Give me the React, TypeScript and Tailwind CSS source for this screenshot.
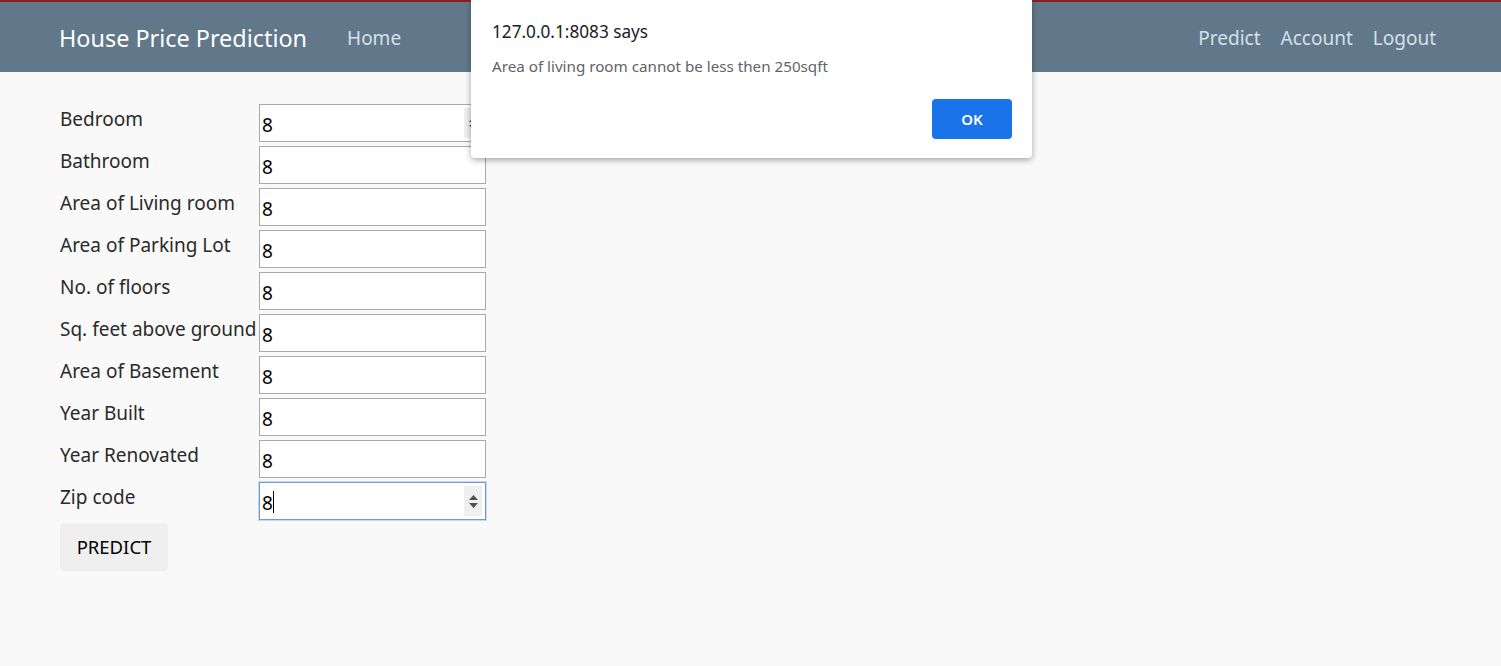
import React from "react";

const fields = [
  "Bedroom",
  "Bathroom",
  "Area of Living room",
  "Area of Parking Lot",
  "No. of floors",
  "Sq. feet above ground",
  "Area of Basement",
  "Year Built",
  "Year Renovated",
  "Zip code",
];

function Spinner() {
  return (
    <div className="absolute right-[3px] top-[3px] bottom-[3px] w-[18px] bg-[#efefef] flex flex-col items-center justify-center gap-[3px]">
      <svg width="9" height="5" viewBox="0 0 9 5"><path d="M0 5 L4.5 0 L9 5 Z" fill="#505050" /></svg>
      <svg width="9" height="5" viewBox="0 0 9 5"><path d="M0 0 L4.5 5 L9 0 Z" fill="#505050" /></svg>
    </div>
  );
}

export default function App() {
  return (
    <div className="relative w-[1501px] h-[666px] bg-[#f9f9f9] overflow-hidden" style={{ fontFamily: '"Noto Sans", "Open Sans", sans-serif' }}>
      <div className="h-[2px] bg-[#8a1f1f]" />
      <nav className="h-[70px] bg-[#607889] flex items-center pl-[59px] pr-[65px] pt-[3px]">
        <span className="text-white text-[23.4px] leading-none">House Price Prediction</span>
        <span className="ml-[40px] text-[#d5e0e8] text-[19px] leading-none">Home</span>
        <div className="ml-auto flex gap-[20px] text-[#d5e0e8] text-[19px] leading-none">
          <span>Predict</span>
          <span>Account</span>
          <span>Logout</span>
        </div>
      </nav>
      <form className="pt-[32px] pl-[60px] flex flex-col gap-[4px]">
        {fields.map((f, i) => (
          <div key={f} className="flex items-start h-[38px]">
            <label className="w-[199px] text-[#2a2a2a] text-[19px] leading-none pt-[6px] whitespace-nowrap">{f}</label>
            <div
              className={
                "relative w-[227px] h-[38px] bg-white flex items-center pl-[2px] text-[19px] text-black " +
                (i === 9 ? "border border-[#6f9ad8] shadow-[0_0_0_1px_#c6d8f2]" : "border border-[#a9a9a9]")
              }
            >
              <span className="pt-[4px] leading-none">8</span>
              {i === 9 && <span className="w-[1px] h-[22px] bg-black mt-[2px]" />}
              {(i === 0 || i === 9) && <Spinner />}
            </div>
          </div>
        ))}
        <div className="-mt-[1px]">
          <button type="button" className="w-[108px] h-[48px] bg-[#efefef] rounded-[4px] text-[18.5px] text-black">PREDICT</button>
        </div>
      </form>

      <div className="absolute left-[471px] top-0 w-[561px] h-[158px] bg-white rounded-b-[4px] shadow-[0_2px_6px_rgba(0,0,0,0.35)] px-[21px]">
        <div className="pt-[23px] text-[17.2px] text-[#202124] leading-none">127.0.0.1:8083 says</div>
        <div className="pt-[19px] text-[15.2px] text-[#5f6368] leading-none">Area of living room cannot be less then 250sqft</div>
        <div className="flex justify-end pt-[25px]">
          <button type="button" className="w-[80px] h-[40px] bg-[#1a73e8] rounded-[4px] text-white text-[15px] font-semibold -mr-[1px]">OK</button>
        </div>
      </div>
    </div>
  );
}
